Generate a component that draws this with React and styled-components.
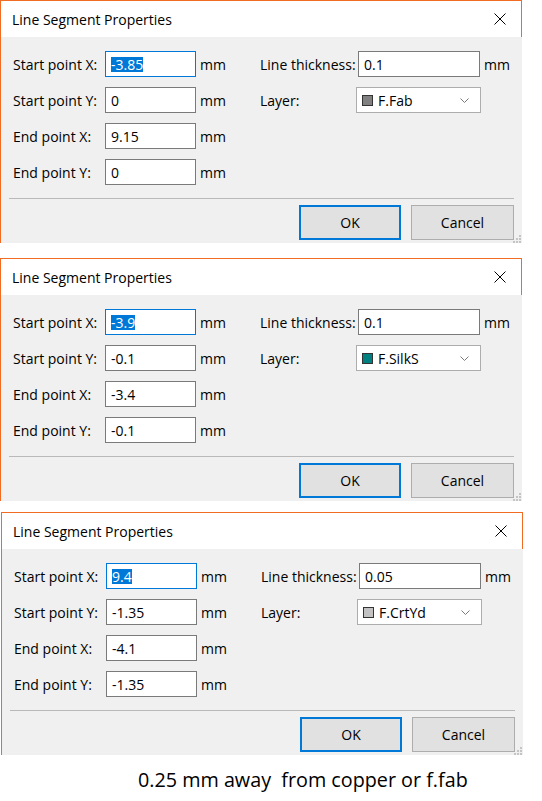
import React from 'react';
import styled, { createGlobalStyle } from 'styled-components';

const GlobalStyle = createGlobalStyle`
	body {
		margin: 0;
		background: #fff;
		font-family: 'Open Sans', 'Noto Sans', sans-serif;
	}
`;

const Page = styled.div`
	display: flex;
	flex-direction: column;
	width: 542px;
`;

const Dialog = styled.div`
	width: 522px;
	box-sizing: border-box;
	border-left: 1px solid #f26b22;
	border-top: 1px solid #f26b22;
	margin-top: ${(props) => props.$gap}px;
	margin-left: ${(props) => props.$shift}px;
`;

const TitleBar = styled.div`
	height: 36px;
	background: #fff;
	border-right: 1px solid #f26b22;
	display: flex;
	align-items: center;
	justify-content: space-between;
	padding: 0 15px 0 11px;
	font-size: 14px;
	color: #000;
`;

const Body = styled.div`
	position: relative;
	height: 206px;
	box-sizing: border-box;
	background: #f0f0f0;
	padding: 14px 8px 0 12px;
	font-size: 14px;
	color: #000;
`;

const Fields = styled.div`
	display: flex;
	align-items: flex-start;
`;

const Grid = styled.div`
	display: grid;
	grid-template-columns: ${(props) => props.$cols};
	grid-auto-rows: 26px;
	row-gap: 10px;
	align-items: center;
`;

const Label = styled.span`
	white-space: nowrap;
`;

const Unit = styled.span`
	padding-left: 4px;
`;

const TextBox = styled.div`
	width: ${(props) => props.$w}px;
	height: 26px;
	box-sizing: border-box;
	border: 1px solid ${(props) => (props.$focus ? '#0078d7' : '#7a7a7a')};
	background: #fff;
	padding-left: 5px;
	display: flex;
	align-items: center;
	line-height: 15px;
`;

const Selected = styled.span`
	background: #0078d7;
	color: #fff;
`;

const Combo = styled.div`
	width: 125px;
	height: 26px;
	margin-left: -2px;
	box-sizing: border-box;
	border: 1px solid #adadad;
	background: #fff;
	display: flex;
	align-items: center;
	padding: 0 11px 0 5px;
	gap: 5px;
`;

const Swatch = styled.span`
	width: 11px;
	height: 11px;
	box-sizing: border-box;
	border: 1px solid #333;
	background: ${(props) => props.$color};
	flex: none;
`;

const ComboText = styled.span`
	flex: 1;
`;

const Separator = styled.div`
	height: 1px;
	background: #b9b9b9;
	margin: 13px 0 0 -4px;
`;

const Buttons = styled.div`
	display: flex;
	justify-content: flex-end;
	gap: 10px;
	margin-top: 6px;
`;

const Button = styled.div`
	width: ${(props) => props.$w}px;
	height: 35px;
	box-sizing: border-box;
	border: ${(props) => (props.$primary ? '2px solid #0078d7' : '1px solid #adadad')};
	background: #e1e1e1;
	display: flex;
	align-items: center;
	justify-content: center;
`;

const Grip = styled.svg`
	position: absolute;
	right: 1px;
	bottom: 0;
`;

const Caption = styled.div`
	margin-top: 11px;
	padding-left: 138px;
	font-size: 19.75px;
	color: #000;
	white-space: pre;
`;

const dialogs = [
	{
		gap: 0,
		shift: 0,
		start: [ '-3.85', '0' ],
		end: [ '9.15', '0' ],
		thickness: '0.1',
		layer: 'F.Fab',
		color: '#808080'
	},
	{
		gap: 15,
		shift: 0,
		start: [ '-3.9', '-0.1' ],
		end: [ '-3.4', '-0.1' ],
		thickness: '0.1',
		layer: 'F.SilkS',
		color: '#008080'
	},
	{
		gap: 11,
		shift: 1,
		start: [ '9.4', '-1.35' ],
		end: [ '-4.1', '-1.35' ],
		thickness: '0.05',
		layer: 'F.CrtYd',
		color: '#c2c2c2'
	}
];

function CloseIcon() {
	return (
		<svg width="12" height="12" viewBox="0 0 12 12">
			<path d="M0.5 0.5 L11.5 11.5 M11.5 0.5 L0.5 11.5" stroke="#000" strokeWidth="1" fill="none" />
		</svg>
	);
}

function Chevron() {
	return (
		<svg width="9" height="5" viewBox="0 0 9 5">
			<path d="M0.5 0.5 L4.5 4.5 L8.5 0.5" stroke="#7a7a7a" strokeWidth="1" fill="none" />
		</svg>
	);
}

function SizeGrip() {
	// little dotted triangle in the bottom-right corner
	const dots = [ [ 6, 0 ], [ 3, 3 ], [ 6, 3 ], [ 0, 6 ], [ 3, 6 ], [ 6, 6 ] ];
	return (
		<Grip width="8" height="8" viewBox="0 0 8 8">
			{dots.map(([ x, y ]) => <rect key={`${x}-${y}`} x={x} y={y} width="2" height="2" fill="#c4c4c4" />)}
		</Grip>
	);
}

function PropertiesDialog({ data }) {
	return (
		<Dialog $gap={data.gap} $shift={data.shift}>
			<TitleBar>
				<span>Line Segment Properties</span>
				<CloseIcon />
			</TitleBar>
			<Body>
				<Fields>
					<Grid $cols="92px 91px 64px">
						<Label>Start point X:</Label>
						<TextBox $w={91} $focus>
							<Selected>{data.start[0]}</Selected>
						</TextBox>
						<Unit>mm</Unit>
						<Label>Start point Y:</Label>
						<TextBox $w={91}>{data.start[1]}</TextBox>
						<Unit>mm</Unit>
						<Label>End point X:</Label>
						<TextBox $w={91}>{data.end[0]}</TextBox>
						<Unit>mm</Unit>
						<Label>End point Y:</Label>
						<TextBox $w={91}>{data.end[1]}</TextBox>
						<Unit>mm</Unit>
					</Grid>
					<Grid $cols="98px 122px auto">
						<Label>Line thickness:</Label>
						<TextBox $w={122}>{data.thickness}</TextBox>
						<Unit>mm</Unit>
						<Label>Layer:</Label>
						<Combo>
							<Swatch $color={data.color} />
							<ComboText>{data.layer}</ComboText>
							<Chevron />
						</Combo>
					</Grid>
				</Fields>
				<Separator />
				<Buttons>
					<Button $w={102} $primary>OK</Button>
					<Button $w={103}>Cancel</Button>
				</Buttons>
				<SizeGrip />
			</Body>
		</Dialog>
	);
}

function App() {
	return (
		<Page>
			<GlobalStyle />
			{dialogs.map((d, i) => <PropertiesDialog key={i} data={d} />)}
			<Caption>0.25 mm away  from copper or f.fab</Caption>
		</Page>
	);
}

export default App;
